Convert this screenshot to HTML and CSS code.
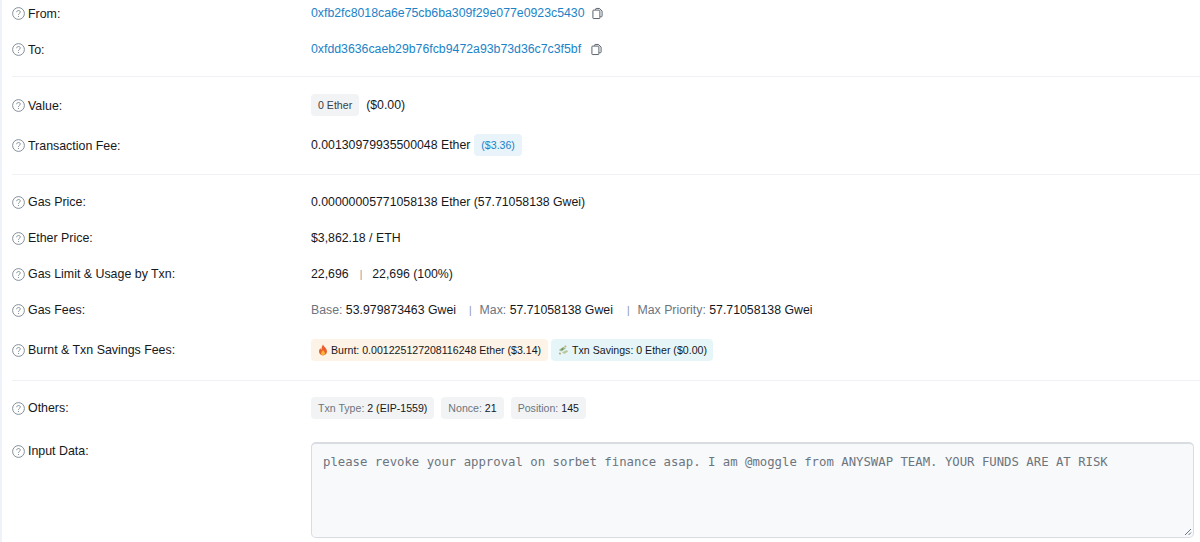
FILE: index.html
```html
<!DOCTYPE html>
<html lang="en">
<head>
<meta charset="utf-8">
<title>Transaction details</title>
<link rel="stylesheet" href="styles.css">
</head>
<body>
<svg class="defs" width="0" height="0" aria-hidden="true">
  <symbol id="help" viewBox="0 0 13 13">
    <circle cx="6.500" cy="6.500" r="5.900" fill="none" stroke="#77838f" stroke-width="0.9"/>
    <path d="M4.700 5.200c0-1.100.8-1.700 1.800-1.700s1.800.6 1.800 1.500c0 1.300-1.800 1.400-1.800 2.800" fill="none" stroke="#77838f" stroke-width="0.9"/>
    <circle cx="6.500" cy="9.500" r=".55" fill="#77838f"/>
  </symbol>
  <symbol id="copy" viewBox="0 0 12 13">
    <path d="M4 2.500V1.600c0-.4.3-.6.6-.6h3.600L11 3.800v5.600c0 .4-.3.6-.6.6H9" fill="none" stroke="#4d5661" stroke-width="1"/>
    <path d="M1.600 2.800H8c.4 0 .6.2.6.6v8c0 .4-.2.6-.6.6H1.600c-.4 0-.6-.2-.6-.6v-8c0-.4.2-.6.6-.6z" fill="#fff" stroke="#4d5661" stroke-width="1"/>
  </symbol>
</svg>
<main class="page">
  <section class="group group-first">
    <div class="row row-36"><div class="label"><svg class="help"><use href="#help"/></svg>From:</div><div class="value"><a class="link">0xfb2fc8018ca6e75cb6ba309f29e077e0923c5430</a><svg class="copy copy-a"><use href="#copy"/></svg></div></div>
    <div class="row row-36"><div class="label"><svg class="help"><use href="#help"/></svg>To:</div><div class="value"><a class="link">0xfdd3636caeb29b76fcb9472a93b73d36c7c3f5bf</a><svg class="copy copy-b"><use href="#copy"/></svg></div></div>
  </section>
  <section class="group group-fee">
    <div class="row row-40"><div class="label"><svg class="help"><use href="#help"/></svg>Value:</div><div class="value"><span class="pill pill-grey pill-dark">0 Ether</span><span class="after-pill">($0.00)</span></div></div>
    <div class="row row-40"><div class="label"><svg class="help"><use href="#help"/></svg>Transaction Fee:</div><div class="value">0.00130979935500048 Ether<span class="pill pill-blue">($3.36)</span></div></div>
  </section>
  <section class="group group-gas">
    <div class="row row-36"><div class="label"><svg class="help"><use href="#help"/></svg>Gas Price:</div><div class="value">0.00000005771058138 Ether (57.71058138 Gwei)</div></div>
    <div class="row row-36"><div class="label"><svg class="help"><use href="#help"/></svg>Ether Price:</div><div class="value">$3,862.18 / ETH</div></div>
    <div class="row row-36"><div class="label"><svg class="help"><use href="#help"/></svg>Gas Limit &amp; Usage by Txn:</div><div class="value">22,696<span class="sep sep-usage">|</span>22,696 (100%)</div></div>
    <div class="row row-36"><div class="label"><svg class="help"><use href="#help"/></svg>Gas Fees:</div><div class="value"><span class="muted">Base:</span>&nbsp;53.979873463 Gwei<span class="sep sep-tight">|</span><span class="muted">Max:</span>&nbsp;57.71058138 Gwei<span class="sep">|</span><span class="muted">Max Priority:</span>&nbsp;57.71058138 Gwei</div></div>
    <div class="row row-44"><div class="label"><svg class="help"><use href="#help"/></svg>Burnt &amp; Txn Savings Fees:</div><div class="value chips chips-fees">
      <span class="pill pill-orange"><svg class="emoji" viewBox="0 0 12 14"><path d="M6 .5c.6 2.400 4.800 4.400 4.800 8.100C10.800 11.500 8.600 13.500 6 13.500S1.200 11.500 1.200 8.800c0-1.800 1-3 1.800-3.900.2 1 .6 1.600 1.300 1.900C4.100 4.400 4.800 2.300 6 .5z" fill="#e8612c"/><path d="M6 7c.3 1.200 2.300 2 2.300 3.800 0 1.400-1 2.600-2.300 2.600s-2.300-1.200-2.300-2.600C3.700 9.200 5.500 8.400 6 7z" fill="#f6b73c"/></svg>Burnt: 0.001225127208116248 Ether ($3.14)</span>
      <span class="pill pill-teal"><svg class="emoji emoji-money" viewBox="0 0 14 12"><path d="M1 6l6-4 3 2-6 4z" fill="#9fb98a"/><path d="M5 9l6-3 2 2-5 3z" fill="#b7c9a0"/><path d="M8 1l2-1 1 2-2 1z" fill="#c9b26a"/><path d="M2 9l2 1-1 2-2-1z" fill="#b8a878"/><circle cx="5.500" cy="5" r="1.200" fill="#6f8a5c"/></svg>Txn Savings: 0 Ether ($0.00)</span>
    </div></div>
  </section>
  <section class="group group-last">
    <div class="row row-others"><div class="label"><svg class="help"><use href="#help"/></svg>Others:</div><div class="value chips">
      <span class="pill pill-grey"><span class="muted">Txn Type:</span>&nbsp;2 (EIP-1559)</span>
      <span class="pill pill-grey"><span class="muted">Nonce:</span>&nbsp;21</span>
      <span class="pill pill-grey"><span class="muted">Position:</span>&nbsp;145</span>
    </div></div>
    <div class="row row-input"><div class="label label-input"><svg class="help"><use href="#help"/></svg>Input Data:</div><div class="value"><div class="input-box">please revoke your approval on sorbet finance asap. I am @moggle from ANYSWAP TEAM. YOUR FUNDS ARE AT RISK<svg class="grip" viewBox="0 0 8 8"><path d="M1 7l6-6M4.500 7L7 4.500" stroke="#6c757e" stroke-width="1" fill="none"/></svg></div></div></div>
  </section>
</main>
</body>
</html>
```

FILE: styles.css
```css
* { box-sizing: border-box; }
html, body { margin: 0; height: 542px; overflow: hidden; background: #fff; }
body { border-left: 2px solid #f0f2fa; font-family: "Liberation Sans", Arial, sans-serif; font-size: 12.300px; color: #16181c; }
.defs { position: absolute; }
.page { padding: 0 0 0 10px; }
.group { border-bottom: 1px solid #eff1f4; }
.group-first { height: 82px; margin-top: -5px; }
.group-fee { height: 98px; padding-top: 8px; }
.group-gas { height: 206px; padding-top: 9px; }
.group-last { border-bottom: 0; padding-top: 9px; }
.row { display: grid; grid-template-columns: 299px 1fr; align-items: center; }
.row-36 { height: 36px; }
.row-40 { height: 40px; }
.row-44 { height: 44px; }
.row-others { height: 36px; margin-bottom: 16px; }
.row-input { align-items: start; }
.label { display: flex; align-items: center; gap: 3px; padding-top: 1px; font-size: 12.400px; }
.group-gas .label, .group-last .label { padding-top: 0; }
.group-last .label-input { padding-top: 2px; }
.help { width: 13px; height: 13px; flex: none; }
.value { display: flex; align-items: center; white-space: nowrap; }
.link { color: #1a83c7; }
.copy { width: 11px; height: 13px; margin-left: 7px; }
.copy-b { margin-left: 10px; }
.muted { color: #6c757e; }
.sep { color: #8a94a0; font-size: 10px; margin: 0 8px 0 14px; }
.sep-tight { margin-left: 13px; }
.sep-usage { margin: 0 10px 0 11px; }
.pill { display: inline-flex; align-items: center; height: 22px; padding: 0 7px; border-radius: 4px; font-size: 10.600px; color: #16181c; }
.pill-grey { background: #f1f3f5; }
.pill-dark { color: #3a4149; }
.pill-blue { background: #e9f3fa; color: #1a83c7; margin-left: 4px; }
.pill-orange { background: #fdf3e6; }
.pill-teal { background: #e6f6f8; padding-right: 6px; margin-left: -1px; }
.after-pill { margin-left: 7px; }
.chips { gap: 7px; }
.chips-fees { gap: 4px; }
.emoji { width: 10px; height: 12px; margin-right: 3px; }
.emoji-money { width: 11px; }
.input-box { position: relative; width: 883px; height: 96px; padding: 9px 11px; background: #f8f9fb; border: 1px solid #d9dce1; border-top-width: 2px; border-radius: 5px; font-family: "DejaVu Sans Mono", monospace; font-size: 12.300px; line-height: 18px; color: #6c757e; }
.grip { position: absolute; right: 1px; bottom: 1px; width: 8px; height: 8px; }
```
